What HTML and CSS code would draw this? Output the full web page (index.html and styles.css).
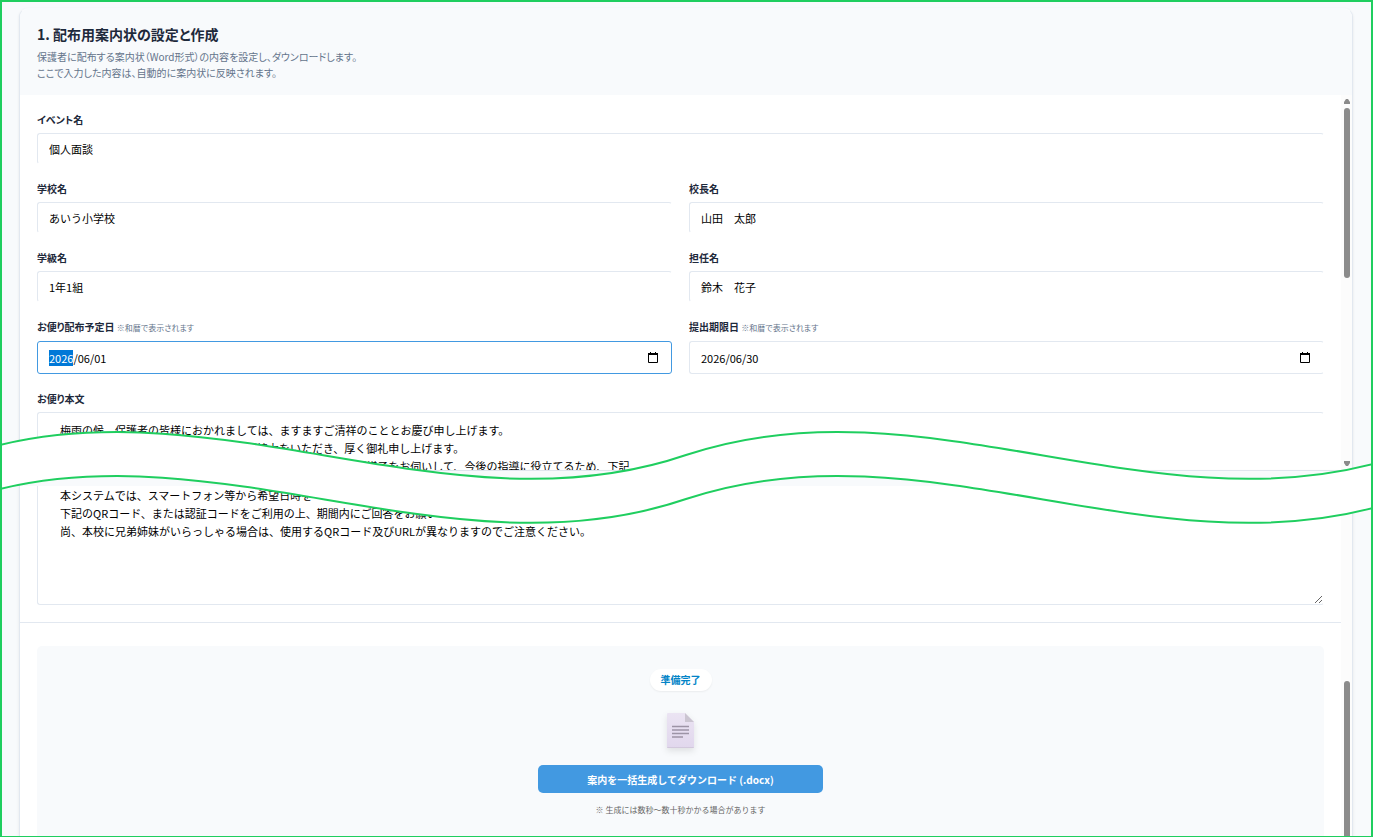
FILE: index.html
```
<!DOCTYPE html>
<html lang="ja">
<head>
    <meta charset="UTF-8">
    <meta name="viewport" content="width=device-width, initial-scale=1.0">
    <title>配布用案内状の設定と作成</title>
    <link rel="stylesheet" href="styles.css">
</head>
<body>
    <div class="frame">
        <!-- Settings -->
        <section class="card card-top">
            <header class="card-header">
                <h1>1. 配布用案内状の設定と作成</h1>
                <p>保護者に配布する案内状（Word形式）の内容を設定し、ダウンロードします。<br>ここで入力した内容は、自動的に案内状に反映されます。</p>
            </header>
            <div class="scroll-area scroll-top">
                <form class="form-grid">
                    <div class="field wide">
                        <label for="event">イベント名</label>
                        <input type="text" id="event" name="event" value="個人面談">
                    </div>
                    <div class="field">
                        <label for="school">学校名</label>
                        <input type="text" id="school" name="school" value="あいう小学校">
                    </div>
                    <div class="field">
                        <label for="principal">校長名</label>
                        <input type="text" id="principal" name="principal" value="山田　太郎">
                    </div>
                    <div class="field">
                        <label for="classname">学級名</label>
                        <input type="text" id="classname" name="classname" value="1年1組">
                    </div>
                    <div class="field">
                        <label for="teacher">担任名</label>
                        <input type="text" id="teacher" name="teacher" value="鈴木　花子">
                    </div>
                    <div class="field">
                        <label for="sendDate">お便り配布予定日 <span class="hint">※和暦で表示されます</span></label>
                        <div class="date-box">
                            <input type="text" id="sendDate" name="sendDate" value="2026/06/01">
                            <button type="button" aria-label="カレンダーを開く">
                                <svg width="10" height="11" viewBox="0 0 10 11"><path d="M.5 2h9v8.500h-9z" fill="none" stroke="#000"/><path d="M0 1h10v2H0zM2 0h1v2H2zM7 0h1v2H7z"/></svg>
                            </button>
                        </div>
                    </div>
                    <div class="field">
                        <label for="dueDate">提出期限日 <span class="hint">※和暦で表示されます</span></label>
                        <div class="date-box">
                            <input type="text" id="dueDate" name="dueDate" value="2026/06/30">
                            <button type="button" aria-label="カレンダーを開く">
                                <svg width="10" height="11" viewBox="0 0 10 11"><path d="M.5 2h9v8.500h-9z" fill="none" stroke="#000"/><path d="M0 1h10v2H0zM2 0h1v2H2zM7 0h1v2H7z"/></svg>
                            </button>
                        </div>
                    </div>
                    <div class="field wide">
                        <label for="body">お便り本文</label>
                        <textarea id="body" name="body" rows="6">　梅雨の候、保護者の皆様におかれましては、ますますご清祥のこととお慶び申し上げます。
　日頃より、本校の教育活動にご理解とご協力をいただき、厚く御礼申し上げます。
　さて、下記の日程で個人面談を実施いたします。ご家庭でのご様子をお伺いして、今後の指導に役立てるため、下記</textarea>
                    </div>
                </form>
                <div class="scrollbar">
                    <svg width="6" height="6" viewBox="0 0 6 6"><path d="M2 0h2l2 3v2H0V3z" fill="#8b8b8b"/></svg>
                    <div class="thumb"></div>
                    <svg class="arrow-down" width="6" height="6" viewBox="0 0 6 6"><path d="M0 0h6v2L4 5H2L0 2z" fill="#8b8b8b"/></svg>
                </div>
            </div>
        </section>

        <!-- Torn band between the two parts -->
        <div class="tear">
            <svg viewBox="0 430 1373 95" preserveAspectRatio="none">
                <path class="band" d="M0 445C229 390 458 533 686 455C915 378 1144 524 1373 464V508C1144 568 915 422 686 499C458 577 229 434 0 489Z"/>
                <path class="edge" d="M0 445C229 390 458 533 686 455C915 378 1144 524 1373 464"/>
                <path class="edge" d="M0 489C229 434 458 577 686 499C915 422 1144 568 1373 508"/>
            </svg>
        </div>

        <!-- Download -->
        <section class="card card-bottom">
            <div class="header-tail"></div>
            <div class="scroll-area scroll-bottom">
                <div class="content">
                    <div class="letter">
                        <textarea class="letter-end" aria-label="お便り本文の続き">　本システムでは、スマートフォン等から希望日時を
　下記のQRコード、または認証コードをご利用の上、期間内にご回答をお願い
　尚、本校に兄弟姉妹がいらっしゃる場合は、使用するQRコード及びURLが異なりますのでご注意ください。</textarea>
                    </div>
                    <div class="download">
                        <span class="badge">準備完了</span>
                        <svg class="doc-icon" width="28" height="36" viewBox="0 0 28 36">
                            <defs>
                                <linearGradient id="paper" x1="0" y1="0" x2="0" y2="1">
                                    <stop offset="0" stop-color="#ebe4f3"/>
                                    <stop offset="1" stop-color="#e1d7ed"/>
                                </linearGradient>
                            </defs>
                            <path d="M1 0h17l9 9v25a1 1 0 0 1-1 1H1a1 1 0 0 1-1-1V1a1 1 0 0 1 1-1z" fill="url(#paper)"/>
                            <path d="M0 34h27a1 1 0 0 1-1 1H1a1 1 0 0 1-1-1z" fill="#d2c8dc"/>
                            <path d="M18 0l9 9h-9z" fill="#cbc5d1"/>
                            <path d="M5 13.500h17M5 17h17M5 20.500h17M5 24h11" stroke="#9d94a6" stroke-width="1.300"/>
                        </svg>
                        <button type="button" class="download-btn">案内を一括生成してダウンロード (.docx)</button>
                        <p class="note">※ 生成には数秒～数十秒かかる場合があります</p>
                    </div>
                </div>
                <div class="scrollbar">
                    <div class="thumb"></div>
                </div>
            </div>
        </section>
    </div>

    <script>
        // Start on the year of the first date
        const sendDate = document.getElementById('sendDate');
        sendDate.focus({ preventScroll: true });
        sendDate.setSelectionRange(0, 4);
    </script>
</body>
</html>
```
FILE: styles.css
```
* {
    box-sizing: border-box;
}

body {
    margin: 0;
    font-family: "Noto Sans CJK JP", "Noto Sans", sans-serif;
    font-size: 10px;
    color: #1e293b;
    background: #f8fafc;
}

h1, p {
    margin: 0;
}

.frame {
    position: relative;
    display: flex;
    flex-direction: column;
    height: 100vh;
    padding: 6px 18px 0 17px;
    border: 2px solid #1fce5f;
    border-bottom-width: 1px;
    overflow: hidden;
}

/* Cards */
.card {
    background: #fff;
    border: 1px solid #e2e8f0;
    box-shadow: 0 1px 3px rgba(0, 0, 0, 0.08);
}

.card-top {
    border-top-color: #f8fafc;
    border-bottom: none;
    border-radius: 9px 9px 0 0;
    overflow: hidden;
    flex-shrink: 0;
}

.card-header {
    padding: 15px 17px 14px;
    background: #f8fafc;
}

.card-header h1 {
    font-size: 14px;
    line-height: 20px;
    font-weight: 700;
    font-feature-settings: "palt";
}

.card-header p {
    margin-top: 5px;
    line-height: 16px;
    color: #64748b;
    font-feature-settings: "palt";
}

.scroll-area {
    display: flex;
}

.scroll-top {
    height: 376px;
    overflow: hidden;
    border-bottom: 1px solid #e2e8f0;
}

/* Form */
.form-grid {
    flex: 1;
    display: grid;
    grid-template-columns: 1fr 1fr;
    align-content: start;
    gap: 18px 17px;
    padding: 18px 17px;
}

.field {
    display: flex;
    flex-direction: column;
    gap: 6px;
}

.wide {
    grid-column: 1 / -1;
}

label {
    line-height: 14px;
    font-weight: 700;
    font-feature-settings: "palt";
}

.hint {
    font-size: 8px;
    font-weight: 400;
    color: #64748b;
}

input, textarea {
    width: 100%;
    font-family: inherit;
    font-size: 11px;
    color: #000;
    background: #fff;
    border: 1px solid #e2e8f0;
    border-right-color: transparent;
    border-radius: 3px;
    outline: none;
}

input {
    height: 31px;
    padding: 0 11px;
    border-bottom-color: transparent;
}

textarea {
    display: block;
    padding: 8px 11px;
    line-height: 18px;
    resize: vertical;
}

input::selection {
    color: #fff;
    background: #0078d7;
}

.date-box {
    display: flex;
    align-items: center;
    height: 33px;
    padding-right: 13px;
    border: 1px solid #e2e8f0;
    border-right-color: transparent;
    border-radius: 3px;
}

.date-box:focus-within {
    border-color: #4299e1;
}

.date-box input {
    height: 29px;
    border: none;
}

.date-box button {
    display: flex;
    padding: 0;
    border: none;
    background: none;
    cursor: pointer;
}

/* Scrollbar */
.scrollbar {
    display: flex;
    flex-direction: column;
    align-items: center;
    width: 11px;
    padding: 4px 0 3px;
    background: #fcfcfc;
}

.thumb {
    width: 6px;
    height: 170px;
    margin-top: 3px;
    border-radius: 3px;
    background: #8b8b8b;
}

.arrow-down {
    margin-top: auto;
}

/* Torn band */
.tear {
    height: 0;
}

.tear svg {
    position: absolute;
    left: -2px;
    top: 428px;
    width: calc(100% + 4px);
    height: 95px;
}

.band {
    fill: #fff;
}

.edge {
    fill: none;
    stroke: #1fce5f;
    stroke-width: 2px;
}

/* Lower part */
.card-bottom {
    flex: 1;
    display: flex;
    flex-direction: column;
    border-top: none;
    border-bottom: none;
    min-height: 0;
}

.header-tail {
    flex-shrink: 0;
    height: 15px;
    background: #f8fafc;
}

.scroll-bottom {
    flex: 1;
    min-height: 0;
}

.content {
    flex: 1;
    display: flex;
    flex-direction: column;
}

.letter {
    padding: 0 17px 17px;
    border-bottom: 1px solid #e2e8f0;
}

.letter-end {
    height: 119px;
    padding-top: 0;
    border-top: none;
    border-radius: 0 0 3px 3px;
}

.download {
    flex: 1;
    display: flex;
    flex-direction: column;
    align-items: center;
    margin: 23px 17px 0;
    padding-top: 23px;
    background: #f8fafc;
    border-radius: 5px 5px 0 0;
}

.badge {
    padding: 0 11px;
    border-radius: 11px;
    line-height: 22px;
    font-weight: 700;
    color: #0284c7;
    background: #fff;
    box-shadow: 0 1px 2px rgba(0, 0, 0, 0.06);
}

.doc-icon {
    margin: 22px 0 16px;
    filter: drop-shadow(0 3px 3px rgba(0, 0, 0, 0.1));
}

.download-btn {
    width: 285px;
    height: 28px;
    border: none;
    border-radius: 5px;
    font-family: inherit;
    font-size: 10px;
    font-weight: 700;
    color: #fff;
    background: #4299e1;
    cursor: pointer;
}

.note {
    margin-top: 10px;
    font-size: 8px;
    line-height: 14px;
    color: #666;
}

.scroll-bottom .scrollbar {
    justify-content: flex-end;
    padding-bottom: 0;
}

.scroll-bottom .thumb {
    height: 155px;
    border-radius: 3px 3px 0 0;
}
```
